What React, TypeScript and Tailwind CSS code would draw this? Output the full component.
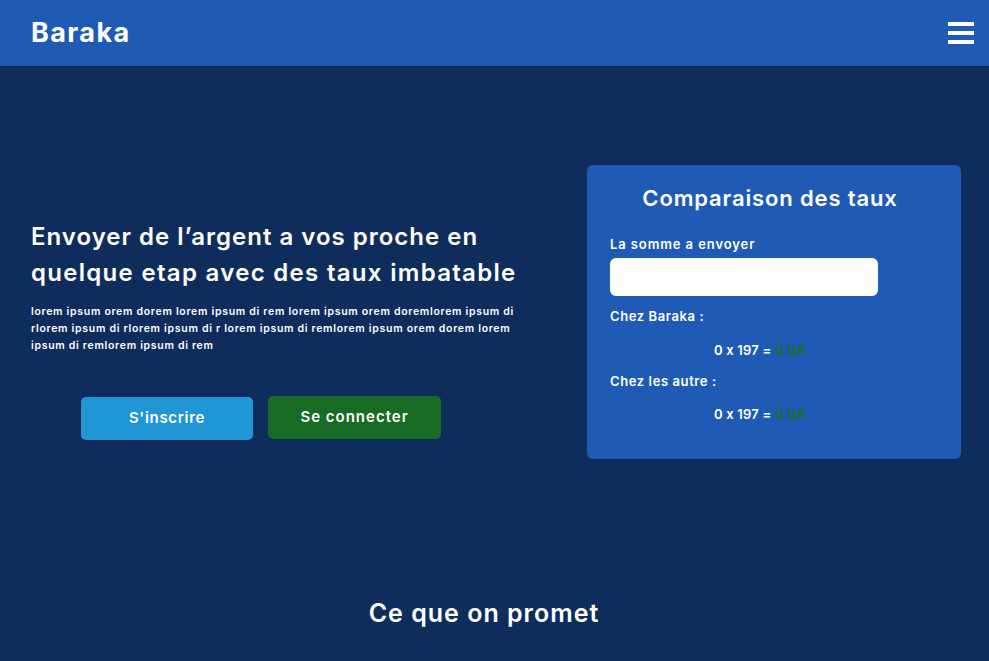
import React from "react";

const font = { fontFamily: "Inter, 'Noto Sans', sans-serif" };

function Result() {
  return (
    <p className="pl-[104px] text-[13px] font-semibold leading-[18px] tracking-[0.2px] text-white">
      0 x 197 = <span className="text-[#1a6f27]">0 DA</span>
    </p>
  );
}

export default function App() {
  return (
    <div className="min-h-[661px] bg-[#0f2d5c] text-white" style={font}>
      <header className="flex h-[67px] items-center justify-between border-b border-[#0c2550] bg-[#1f5bb5] pl-[31px] pr-[15px]">
        <span className="text-[27px] font-bold tracking-[1.4px]">Baraka</span>
        <div className="flex flex-col gap-[5px]">
          <span className="block h-[4px] w-[26px] bg-white" />
          <span className="block h-[4px] w-[26px] bg-white" />
          <span className="block h-[4px] w-[26px] bg-white" />
        </div>
      </header>

      <section className="flex items-start justify-between pl-[31px] pr-[28px]">
        <div className="w-[530px] pt-[152px]">
          <h1 className="text-[24px] font-semibold leading-[36px] tracking-[1px]">
            Envoyer de l’argent a vos proche en
            <br />
            <span className="tracking-[1.3px]">quelque etap avec des taux imbatable</span>
          </h1>
          <p className="mt-[12px] whitespace-nowrap text-[10.5px] font-semibold leading-[17px] tracking-[0.7px]">
            lorem ipsum orem dorem lorem ipsum di rem lorem ipsum orem doremlorem ipsum di
            <br />
            rlorem ipsum di rlorem ipsum di r lorem ipsum di remlorem ipsum orem dorem lorem
            <br />
            ipsum di remlorem ipsum di rem
          </p>
          <div className="mt-[41px] flex items-center gap-[15px] pl-[50px]">
            <button className="mt-[2px] h-[43px] w-[172px] rounded-[5px] bg-[#2196d6] text-[15px] font-semibold tracking-[0.7px]">
              S'inscrire
            </button>
            <button className="h-[43px] w-[173px] rounded-[5px] bg-[#186b24] text-[15px] font-semibold tracking-[1px]">
              Se connecter
            </button>
          </div>
        </div>

        <div className="mt-[98px] h-[294px] w-[374px] rounded-[6px] bg-[#1f5bb5] px-[23px] pt-[18px]">
          <h2 className="pr-[8px] text-center text-[22px] font-semibold leading-[30px] tracking-[0.85px]">Comparaison des taux</h2>
          <label className="mt-[22px] block text-[13px] font-semibold leading-[18px] tracking-[0.9px]">La somme a envoyer</label>
          <input className="mt-[5px] block h-[38px] w-[268px] rounded-[6px] bg-white px-3 text-black outline-none" />
          <p className="mt-[11px] text-[13px] font-semibold leading-[18px] tracking-[0.6px]">Chez Baraka :</p>
          <div className="mt-[16px]">
            <Result />
          </div>
          <p className="mt-[13px] text-[13px] font-semibold leading-[18px] tracking-[0.6px]">Chez les autre :</p>
          <div className="mt-[15px]">
            <Result />
          </div>
        </div>
      </section>

      <h2 className="pr-[21px] pt-[136px] text-center text-[25px] font-semibold leading-[36px] tracking-[1px]">Ce que on promet</h2>
    </div>
  );
}
